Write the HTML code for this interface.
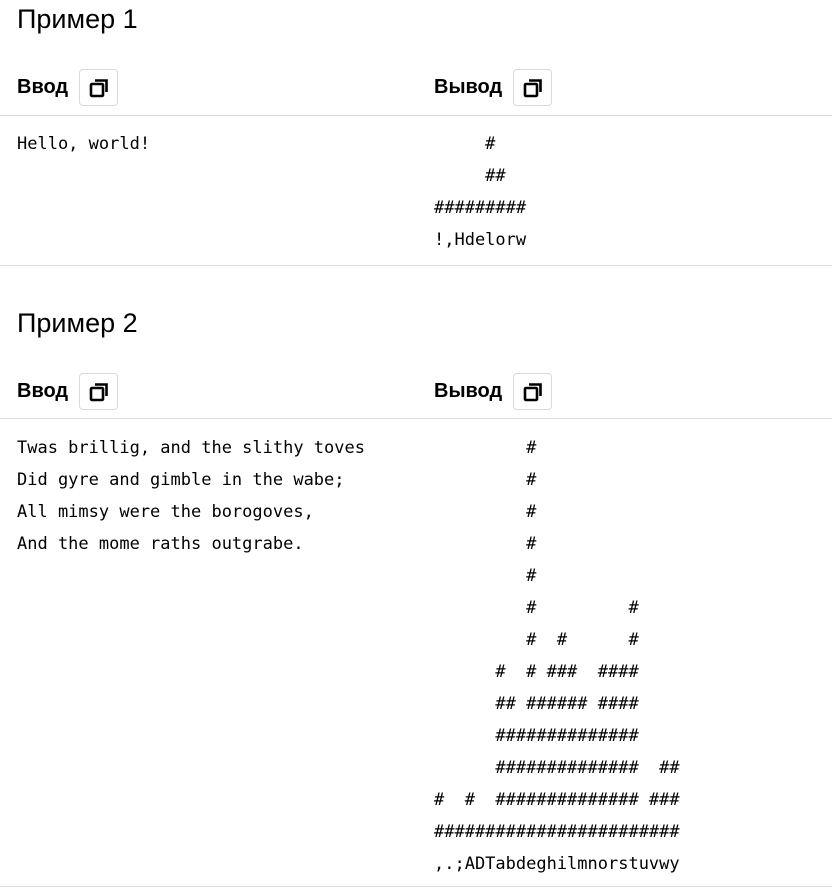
<!DOCTYPE html>
<html><head><meta charset="utf-8"><style>
body{margin:0;width:838px;height:893px;background:#fff;position:relative;font-family:"Liberation Sans",sans-serif;color:#000;overflow:hidden}
.h{position:absolute;left:17px;font-size:27px;line-height:32px}
.l{position:absolute;font-weight:bold;font-size:20px;line-height:24px}
.b{position:absolute;width:39px;height:37px;border:1px solid #d9d9d9;border-radius:4px;box-sizing:border-box}
.b svg{position:absolute;left:9px;top:8px}
.hr{position:absolute;left:0;width:832px;height:1px;background:#dcdcdc}
pre{position:absolute;margin:0;font-family:"DejaVu Sans Mono","Liberation Mono",monospace;font-size:17px;line-height:32px}
</style></head><body>
<div class="h" style="top:3px">Пример 1</div>
<div class="l" style="left:17px;top:75px">Ввод</div>
<div class="b" style="left:79px;top:69px"><svg width="20" height="20" viewBox="0 0 20 20" fill="none" stroke="#000" stroke-width="2.6"><rect x="2" y="6" width="12" height="12" rx="1"/><path d="M6 2.5h11.5V14"/></svg></div>
<div class="l" style="left:434px;top:75px">Вывод</div>
<div class="b" style="left:513px;top:69px"><svg width="20" height="20" viewBox="0 0 20 20" fill="none" stroke="#000" stroke-width="2.6"><rect x="2" y="6" width="12" height="12" rx="1"/><path d="M6 2.5h11.5V14"/></svg></div>
<div class="hr" style="top:115px"></div>
<pre style="left:17px;top:128px">Hello, world!</pre>
<pre style="left:434px;top:128px">     #
     ##
#########
!,Hdelorw</pre>
<div class="hr" style="top:265px"></div>
<div class="h" style="top:307px">Пример 2</div>
<div class="l" style="left:17px;top:379px">Ввод</div>
<div class="b" style="left:79px;top:373px"><svg width="20" height="20" viewBox="0 0 20 20" fill="none" stroke="#000" stroke-width="2.6"><rect x="2" y="6" width="12" height="12" rx="1"/><path d="M6 2.5h11.5V14"/></svg></div>
<div class="l" style="left:434px;top:379px">Вывод</div>
<div class="b" style="left:513px;top:373px"><svg width="20" height="20" viewBox="0 0 20 20" fill="none" stroke="#000" stroke-width="2.6"><rect x="2" y="6" width="12" height="12" rx="1"/><path d="M6 2.5h11.5V14"/></svg></div>
<div class="hr" style="top:418px"></div>
<pre style="left:17px;top:432px">Twas brillig, and the slithy toves
Did gyre and gimble in the wabe;
All mimsy were the borogoves,
And the mome raths outgrabe.</pre>
<pre style="left:434px;top:432px">         #
         #
         #
         #
         #
         #         #
         #  #      #
      #  # ###  ####
      ## ###### ####
      ##############
      ##############  ##
#  #  ############## ###
########################
,.;ADTabdeghilmnorstuvwy</pre>
<div class="hr" style="top:886px"></div>
</body></html>
